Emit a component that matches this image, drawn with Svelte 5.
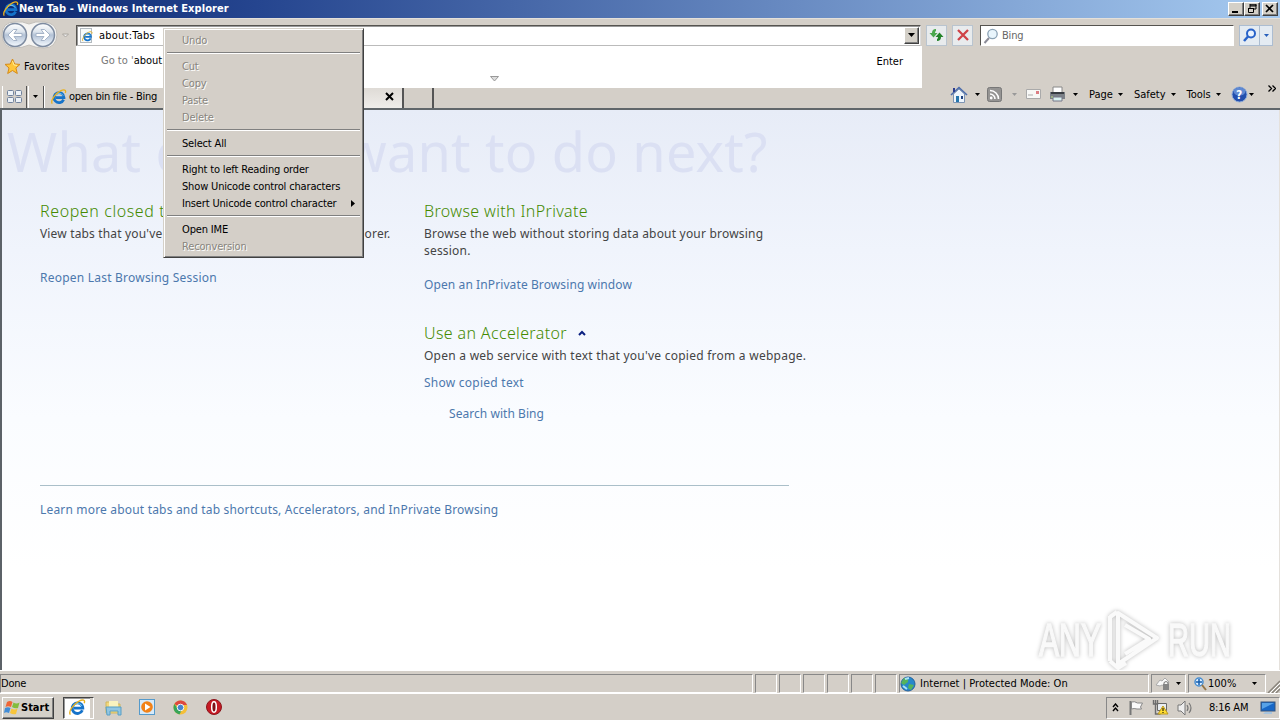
<script lang="ts">
  type MenuItem = { label?: string; disabled?: boolean; submenu?: boolean; separator?: boolean };

  const menu: MenuItem[] = [
    { label: 'Undo', disabled: true },
    { separator: true },
    { label: 'Cut', disabled: true },
    { label: 'Copy', disabled: true },
    { label: 'Paste', disabled: true },
    { label: 'Delete', disabled: true },
    { separator: true },
    { label: 'Select All' },
    { separator: true },
    { label: 'Right to left Reading order' },
    { label: 'Show Unicode control characters' },
    { label: 'Insert Unicode control character', submenu: true },
    { separator: true },
    { label: 'Open IME' },
    { label: 'Reconversion', disabled: true }
  ];

  const commands = ['Page', 'Safety', 'Tools'];
  const panes = [1, 2, 3, 4, 5, 6];
</script>

{#snippet ie(size: number)}
  <svg width={size} height={size} viewBox="0 0 16 16">
    <path d="M12.6 10.6A5 5 0 1 1 13 8.6H4.6" fill="none" stroke="#1673c9" stroke-width="2.7" />
    <path d="M12.2 6.6A4.6 4.6 0 0 0 4 7" fill="none" stroke="#6cc3f4" stroke-width="1" />
    <path d="M1.3 14.7C-1 12 4.500 4.300 9.500 1.900C13 .2 15.600 .7 14.300 4" fill="none" stroke="#e9b11f" stroke-width="1.3" />
  </svg>
{/snippet}

{#snippet caret(light: boolean)}
  <svg class="caret" width="5" height="3" viewBox="0 0 5 3"><path d="M0 0h5L2.500 3z" fill={light ? '#999' : '#000'} /></svg>
{/snippet}

<div class="screen">
  <header class="titlebar">
    {@render ie(16)}
    <h1>New Tab - Windows Internet Explorer</h1>
    <div class="window-buttons">
      <button aria-label="Minimize"><svg width="10" height="9"><path d="M1 7h6v2H1z" /></svg></button>
      <button aria-label="Restore"><svg width="10" height="9"><path d="M3 1h6v4H7M3 0h6v2H3zM3 2v2" fill="none" stroke="#000" /><path d="M1.500 4.500h5v4h-5zM1 4.500h6" fill="none" stroke="#000" /></svg></button>
      <button class="close" aria-label="Close"><svg width="10" height="9"><path d="M1 1l7 7M8 1L1 8" stroke="#000" stroke-width="1.7" /></svg></button>
    </div>
  </header>

  <nav class="navbar">
    <svg class="travel" width="72" height="30" viewBox="0 0 72 30">
      <defs>
        <linearGradient id="orb" x1="0" y1="0" x2="0" y2="1">
          <stop offset="0" stop-color="#fff" />
          <stop offset=".35" stop-color="#dfe6ee" />
          <stop offset=".5" stop-color="#b3c2d6" />
          <stop offset="1" stop-color="#f5faff" />
        </linearGradient>
      </defs>
      <path d="M2 15Q2 2 15 2Q23 1 29 4Q35 1 44 2Q57 3 57 15Q56 28 44 28Q36 28 29 25Q22 28 15 28Q3 28 2 15" fill="#f5f4f2" stroke="#c2bfba" />
      <circle cx="15" cy="15" r="11.500" fill="url(#orb)" stroke="#7d8ba0" stroke-width="1.500" />
      <circle cx="43" cy="15" r="11.500" fill="url(#orb)" stroke="#7d8ba0" stroke-width="1.500" />
      <path d="M22 13.500H14l3-4h-3.500L8 15l5.500 5.500H17l-3-4h8z" fill="#fff" stroke="#a6b4c8" />
      <path d="M36 13.500h8l-3-4h3.500L50 15l-5.500 5.500H41l3-4h-8z" fill="#fff" stroke="#a6b4c8" />
      <path d="M62.500 14h6l-3 3z" fill="#eee" stroke="#aaa6a0" />
    </svg>

    <div class="address">
      <span class="page-icon">{@render ie(11)}</span>
      <span class="url">about:Tabs</span>
      <button class="drop" aria-label="Show addresses"><svg width="7" height="4"><path d="M0 0h7L3.500 4z" /></svg></button>
      <div class="suggest">
        <span class="goto">Go to '</span><span class="typed">about:Tabs'</span>
        <span class="enter">Enter</span>
        <svg class="expand" width="9" height="6"><path d="M.5.5h8l-4 4.500z" fill="#ddd" stroke="#999" /></svg>
      </div>
    </div>

    <button class="tool refresh" aria-label="Refresh">
      <svg width="17" height="16"><path d="M8 2Q4 2 4 6H1.500L5.500 10.500 9.500 6H7Q7 4 8 4z" fill="#4aa84c" /><path d="M9 14q4 0 4-4h2.500L11.500 5.500 7.500 10H10q0 2-1 2z" fill="#238329" /></svg>
    </button>
    <button class="tool" aria-label="Stop">
      <svg width="14" height="14"><path d="M2 2l10 10M12 2L2 12" stroke="#cf4247" stroke-width="2.300" /></svg>
    </button>

    <div class="search">
      <svg width="16" height="16"><circle cx="9.500" cy="6" r="4.700" fill="#e9f5fc" stroke="#8ba2b5" stroke-width="1.300" /><path d="M6 10l-4.500 5" stroke="#8c8c98" stroke-width="2" /></svg>
      <span>Bing</span>
    </div>
    <div class="search-go">
      <span><svg width="15" height="15"><circle cx="9" cy="5.500" r="4" fill="#e8f2ff" stroke="#2862c9" stroke-width="2" /><path d="M6 8.500L2 13" stroke="#2862c9" stroke-width="2.500" /></svg></span>
      <span><svg width="5" height="3"><path d="M0 0h5L2.500 3z" fill="#275fbb" /></svg></span>
    </div>
  </nav>

  <div class="favorites">
    <svg width="17" height="17" viewBox="0 0 17 17"><path d="M8.500 1l2.200 5 5.300.4-4.100 3.600 1.400 5.500-4.800-3-4.800 3L5 10 1 6.400 6.300 6z" fill="#ffc63a" stroke="#d58a18" /><path d="M8.500 3L10 7l3 .4" fill="none" stroke="#ffee98" /></svg>
    <span>Favorites</span>
  </div>

  <div class="tabs-row">
    <div class="quick">
      <svg width="17" height="15"><g fill="#edf2f7" stroke="#71829d"><rect x="1.500" y="1.500" width="6" height="5" rx="1" /><rect x="9.500" y="1.500" width="6" height="5" rx="1" /><rect x="1.500" y="8.500" width="6" height="5" rx="1" /><rect x="9.500" y="8.500" width="6" height="5" rx="1" /></g></svg>
    </div>
    <div class="quick-drop">{@render caret(false)}</div>
    <div class="tab">{@render ie(16)}<span>open bin file - Bing</span></div>
    <div class="tab active">
      <svg width="9" height="9"><path d="M1 1l7 7M8 1L1 8" stroke="#000" stroke-width="2" /></svg>
    </div>
    <div class="new-tab"></div>
    <div class="commands">
      <svg class="home" width="18" height="18" viewBox="0 0 18 18"><path d="M3.500 8v8.500h11V8L9 3z" fill="#eef5fc" stroke="#7e94b2" /><path d="M1 9l8-7.500L17 9" fill="none" stroke="#4b6cab" stroke-width="1.600" /><path d="M3 2h2v4H3z" fill="#2c3d8f" /><path d="M6 10h3v6H6z" fill="#2676ad" /><path d="M11 10h2v3h-2z" fill="#224481" /></svg>
      {@render caret(false)}
      <svg class="rss" width="15" height="15"><rect x=".5" y=".5" width="14" height="14" rx="2" fill="#959493" stroke="#777" /><path d="M3 7a5 5 0 0 1 5 5M3 3.500A8.500 8.500 0 0 1 11.500 12" fill="none" stroke="#fff" stroke-width="1.600" /><circle cx="4.200" cy="11" r="1.400" fill="#fff" /></svg>
      {@render caret(true)}
      <svg class="mail" width="15" height="11"><path d="M.5.500h14v9H.5z" fill="#f8f8f6" stroke="#aaa" /><path d="M2 6h5" stroke="#aaa" /><path d="M10 2h3v3h-3z" fill="#dc7d83" /></svg>
      <svg class="print" width="17" height="17"><path d="M4 1h9v6H4z" fill="#fff" stroke="#888" /><path d="M1 6h15v7H1z" fill="#7b8087" /><path d="M2 6h13v2H2z" fill="#373b41" /><path d="M4 11h9v4H4z" fill="#d9f1ef" stroke="#778" /><path d="M2 11h2" stroke="#bce27c" /></svg>
      {@render caret(false)}
      {#each commands as command}
        <span class="command">{command}{@render caret(false)}</span>
      {/each}
      <svg class="help" width="17" height="17"><circle cx="8.500" cy="8.500" r="7.500" fill="#234fae" stroke="#8eabd8" /><ellipse cx="8.500" cy="5.500" rx="6" ry="4" fill="#5f89d2" /><text x="5" y="13" fill="#fff" font-size="12" font-weight="bold">?</text></svg>
      {@render caret(false)}
      <svg class="chevron" width="8" height="7"><path d="M.5.500l3 3-3 3M4.500.500l3 3-3 3" fill="none" stroke="#000" stroke-width="1.300" /></svg>
    </div>
  </div>

  <main>
    <h2 class="hero">What do you want to do next?</h2>
    <div class="columns">
      <section>
        <h3 class="reopen">Reopen closed tabs</h3>
        <p class="closed">View tabs that you've closed since opening Internet Explorer.</p>
        <a class="session" href="#session">Reopen Last Browsing Session</a>
      </section>
      <section>
        <h3>Browse with InPrivate</h3>
        <p class="storing">Browse the web without storing data about your browsing session.</p>
        <a class="inprivate" href="#inprivate">Open an InPrivate Browsing window</a>
        <h3 class="accelerator">Use an Accelerator <svg width="8" height="6"><path d="M1 5l3-3 3 3" fill="none" stroke="#0a2080" stroke-width="2" /></svg></h3>
        <p class="service">Open a web service with text that you've copied from a webpage.</p>
        <a class="copied" href="#copied">Show copied text</a>
        <a class="bing" href="#bing">Search with Bing</a>
      </section>
    </div>
    <footer><a href="#learn">Learn more about tabs and tab shortcuts, Accelerators, and InPrivate Browsing</a></footer>
    <svg class="watermark" width="220" height="68" viewBox="0 0 220 68">
      <g class="mark-text">
        <text x="5" y="51" textLength="62" lengthAdjust="spacingAndGlyphs">ANY</text>
        <text x="134" y="51" textLength="63" lengthAdjust="spacingAndGlyphs">RUN</text>
      </g>
      <g class="mark-play"><path d="M76 11v45M84 8l39 25-39 26zM91 20l24 14-24 15M76 12l7-5M76 56l8 7 8-5" /></g>
    </svg>
  </main>

  <div class="status">
    <span class="done">Done</span>
    {#each panes as pane (pane)}<span class="pane"></span>{/each}
    <span class="zone">
      <svg width="16" height="16"><circle cx="8" cy="8" r="7" fill="#2688cb" stroke="#24609d" /><path d="M4 2q5 0 4 4l-4 3-3-2zM9 8l5 1-3 5-3-2z" fill="#55b45c" /><path d="M5 3l4-1M3 10l4 3" stroke="#a8e4f8" stroke-width="2" /></svg>
      <span>Internet | Protected Mode: On</span>
    </span>
    <span class="filter">
      <svg width="18" height="16"><path d="M1 9l4-5 2 1 3-3 4 4-3 5-4-2-2 1z" fill="#f8f8f8" stroke="#aaa" /><path d="M8 8h6v6H8z" fill="#858585" /><path d="M9 8V6.500q2-2 4 0V8" fill="none" stroke="#777" /></svg>
      {@render caret(false)}
    </span>
    <span class="zoom">
      <svg width="14" height="14"><circle cx="6" cy="5" r="4" fill="#deefff" stroke="#478dd0" stroke-width="1.500" /><path d="M6 2v6M3 5h6" stroke="#145eaf" stroke-width="1.500" /><path d="M9 8l4 5" stroke="#947548" stroke-width="2" /></svg>
      <span>100%</span>{@render caret(false)}
    </span>
    <svg class="grip" width="13" height="14"><path d="M1 14L13 2M5 14l8-8M9 14l4-4" stroke="#89847b" stroke-width="1.500" /><path d="M2 15L14 3M6 15l8-8" stroke="#fff" /></svg>
  </div>

  <div class="taskbar">
    <button class="start">
      <svg width="17" height="15" viewBox="0 0 17 15"><path d="M3 2q3-2 5.500 0L7 7Q4 5.500 1.500 7z" fill="#ef6637" /><path d="M9.500 2.500q3 2 6 0L14 8q-3 1-6-1z" fill="#83bd3e" /><path d="M1 8q3-1.500 5.500 0L5 13q-3-1.500-5 0z" fill="#428dd7" /><path d="M7.500 8.500q3 2 6 0L12 14q-3 1-6-1z" fill="#f8c53a" /></svg>
      Start
    </button>
    <div class="task">{@render ie(17)}</div>
    <svg class="explorer" width="17" height="17"><path d="M1 3h5l1 2h8v9H1z" fill="#f3d77c" stroke="#d1b85c" /><path d="M4 2h9v8H4z" fill="#faf3bf" /><path d="M1 8h15v8h-3v-4H5v4H2z" fill="#91c6e2" stroke="#579fc6" /></svg>
    <svg class="player" width="17" height="17"><rect x=".5" y=".5" width="15" height="15" fill="#d6eafa" stroke="#559acb" /><circle cx="8" cy="8" r="5.800" fill="#f28218" /><path d="M6 4.500L11.500 8 6 11.500z" fill="#fff" /></svg>
    <svg class="chrome" width="15" height="15"><circle cx="7.500" cy="7.500" r="7" fill="#f4bf38" /><path d="M7.500 7.500L1.400 4A7 7 0 0 1 14 5H7.500z" fill="#dd4840" /><path d="M1.400 4a7 7 0 0 0 5 10.400l3.200-5.600-4.500.2z" fill="#38a55a" /><circle cx="7.500" cy="7.500" r="3.300" fill="#4684cf" stroke="#f4f6f4" /></svg>
    <svg class="opera" width="17" height="17"><circle cx="8" cy="8" r="7.500" fill="#c71a24" stroke="#8b161c" /><ellipse cx="8" cy="8" rx="2.300" ry="5.200" fill="#7f1016" stroke="#fff" stroke-width="1.500" /></svg>
    <div class="tray">
      <svg class="more" width="7" height="9"><path d="M1 4l2.500-3L6 4M1 8l2.500-3L6 8" fill="none" stroke="#000" stroke-width="1.400" /></svg>
      <svg class="flag" width="16" height="16"><path d="M2.500 1v14" stroke="#777" stroke-width="2" /><path d="M3.500 2q3-1 6 1h5l-2 4 1 2H9Q6 8 3.500 9z" fill="#fafafa" stroke="#888" /></svg>
      <svg class="network" width="17" height="17"><path d="M5.500 4.500h9v7h-9z" fill="#e9edf1" stroke="#666" /><path d="M1.500 1v4h4V1M3.500 1v14h5" fill="none" stroke="#6c6c6c" stroke-width="1.400" /><path d="M11 7l5 8H6z" fill="#ffdd31" stroke="#bd991f" /><path d="M11 9v3M11 13v1" stroke="#000" /></svg>
      <svg class="volume" width="17" height="16"><path d="M1 5h3l4-4v14l-4-4H1z" fill="#eee" stroke="#777" /><path d="M10 5q2 3 0 6M12 3q4 5 0 10" fill="none" stroke="#777" stroke-width="1.200" /></svg>
      <span class="clock">8:16 AM</span>
      <svg class="desktop" width="16" height="14"><rect x="1" y="1" width="14" height="9" fill="#1767c7" stroke="#35557d" /><path d="M2 2h12l-8 4-4 2z" fill="#57a2e7" /><path d="M5 11h7v2H3z" fill="#a8c5df" /></svg>
    </div>
  </div>

  <div class="context-menu" role="menu">
    {#each menu as item}
      {#if item.separator}
        <div class="separator"></div>
      {:else}
        <div class="item" class:disabled={item.disabled} role="menuitem" tabindex="-1">
          <span>{item.label}</span>
          {#if item.submenu}<svg width="4" height="7"><path d="M0 0v7l4-3.500z" /></svg>{/if}
        </div>
      {/if}
    {/each}
  </div>
</div>

<style>
  :global(body) {
    background: #d4cfc8;
    overflow: hidden;
  }

  * {
    box-sizing: border-box;
  }

  svg {
    display: block;
    flex-shrink: 0;
  }

  .screen {
    position: relative;
    width: 1280px;
    height: 720px;
    display: flex;
    flex-direction: column;
    background: #d4cfc8;
    color: #000;
    font: 11px/14px "DejaVu Sans Condensed", "DejaVu Sans", "Liberation Sans", sans-serif;
    font-stretch: condensed;
    letter-spacing: -0.2px;
  }

  button {
    padding: 0;
    color: inherit;
    font: inherit;
    letter-spacing: inherit;
    background: #d4d0c8;
    border: 1px solid;
    border-color: #fff #404040 #404040 #fff;
  }

  .titlebar {
    height: 18px;
    display: flex;
    align-items: center;
    padding: 0 2px 0 3px;
    background: linear-gradient(90deg, #0c286f, #25458f 20%, #a6caf0);
  }

  .titlebar h1 {
    flex: 1;
    margin: 1px 0 0;
    font-size: 11px;
    color: #fff;
    letter-spacing: 0.07px;
  }

  .window-buttons {
    display: flex;
  }

  .window-buttons button {
    width: 16px;
    height: 14px;
    display: grid;
    place-items: center;
    box-shadow: inset -1px -1px #808080;
  }

  .window-buttons .close {
    margin-left: 2px;
  }

  .navbar {
    height: 35px;
    display: flex;
    align-items: flex-start;
    padding-top: 6px;
    border-top: 1px solid #e4e0da;
  }

  .travel {
    margin: -5px 4px 0 0;
  }

  .address {
    position: relative;
    width: 845px;
    height: 21px;
    display: flex;
    align-items: center;
    background: #fff;
    border: 1px solid;
    border-color: #55534f #ddd #bbb #55534f;
    box-shadow: inset 1px 1px #999;
  }

  .page-icon {
    width: 12px;
    height: 15px;
    margin-left: 3px;
    padding: 2px 0 0 1px;
    border: 1px solid #b3bac0;
    background: #f7faf9;
  }

  .url {
    flex: 1;
    margin: 2px 0 0 7px;
    letter-spacing: 0.22px;
  }

  .drop {
    width: 15px;
    height: 17px;
    margin-right: 1px;
    display: grid;
    place-items: center;
    box-shadow: inset -1px -1px #808080;
  }

  .suggest {
    position: absolute;
    top: 20px;
    left: -1px;
    width: 846px;
    height: 42px;
    z-index: 2;
    display: flex;
    padding: 8px 19px 0 25px;
    background: #fff;
  }

  .goto {
    color: #777;
    white-space: pre;
    letter-spacing: 0;
  }

  .typed,
  .enter {
    letter-spacing: 0;
  }

  .enter {
    margin-left: auto;
    margin-top: 1px;
  }

  .expand {
    position: absolute;
    left: 414px;
    top: 30px;
  }

  .tool {
    width: 21px;
    height: 21px;
    margin-left: 5px;
    display: grid;
    place-items: center;
    background: #e8ebed;
    border: 1px solid #b9c4cf;
  }

  .refresh {
    margin-left: 5px;
  }

  .search {
    width: 254px;
    height: 21px;
    margin-left: 7px;
    display: flex;
    align-items: center;
    gap: 3px;
    padding: 1px 0 0 2px;
    color: #666;
    background: #fff;
    border: 1px solid;
    border-color: #55534f #fff #fff #55534f;
  }

  .search-go {
    display: flex;
    width: 34px;
    height: 21px;
    margin-left: 5px;
    border: 1px solid #acbdd1;
    background: #e4ebf2;
  }

  .search-go span {
    display: grid;
    place-items: center;
    width: 20px;
  }

  .search-go span + span {
    width: 13px;
    border-left: 1px solid #acbdd1;
  }

  .favorites {
    height: 32px;
    display: flex;
    align-items: center;
    gap: 3px;
    padding: 0 0 5px 4px;
    letter-spacing: 0.1px;
  }

  .favorites span {
    margin-top: 1px;
  }

  .tabs-row {
    height: 25px;
    display: flex;
    align-items: stretch;
    padding-top: 1px;
    padding-left: 2px;
    border-bottom: 2px solid #60666a;
  }

  .quick {
    width: 25px;
    display: grid;
    place-items: center;
    border-right: 1px solid #555;
    border-left: 1px solid #fff;
  }

  .quick-drop {
    width: 16px;
    margin-left: 1px;
    padding-left: 4px;
    display: flex;
    align-items: center;
    border-left: 1px solid #fff;
    border-right: 1px solid #555;
  }

  .tab {
    width: 186px;
    padding-left: 6px;
    display: flex;
    align-items: center;
    gap: 2px;
    border-left: 1px solid #fff;
    letter-spacing: -0.27px;
  }

  .tab span {
    margin-top: 1px;
  }

  .tab.active {
    width: 174px;
    padding-right: 8px;
    justify-content: flex-end;
    background: linear-gradient(#ddd9d4, #efedea);
    border-right: 2px solid #555;
  }

  .new-tab {
    width: 30px;
    border-right: 2px solid #555;
  }

  .commands {
    width: 325px;
    margin-left: auto;
    margin-top: -4px;
    display: flex;
    align-items: center;
  }

  .home {
    margin: 0 7px 0 -5px;
  }

  .rss {
    margin: 0 10px 0 7px;
  }

  .mail {
    margin: 0 8px 0 9px;
  }

  .print {
    margin-right: 7px;
  }

  .command {
    display: flex;
    align-items: center;
    gap: 5px;
    margin-left: 11px;
    letter-spacing: 0;
  }

  .help {
    margin-left: 10px;
    margin-right: 1px;
  }

  .chevron {
    margin: -13px 0 0 14px;
  }

  main {
    position: relative;
    height: 561px;
    overflow: hidden;
    background: linear-gradient(#e7ecf7, #f0f4fc 25%, #fafcff 55%, #fff 82%);
    border-left: 2px solid #5c6268;
    border-right: 1px solid #e5e1dc;
    font: 12px/17px "Noto Sans", "Open Sans", sans-serif;
    letter-spacing: 0.18px;
    color: #444;
  }

  .hero {
    height: 70px;
    margin: 6px 0 15px 5px;
    font-size: 54px;
    font-weight: 400;
    line-height: 70px;
    color: #dbe0f3;
    white-space: nowrap;
    letter-spacing: 0.2px;
  }

  .columns {
    display: flex;
    height: 284px;
    padding-left: 38px;
  }

  .columns section {
    width: 384px;
    display: flex;
    flex-direction: column;
    align-items: flex-start;
    white-space: nowrap;
  }

  h3 {
    margin: 0;
    height: 24px;
    font-size: 16px;
    font-weight: 300;
    line-height: 20px;
    letter-spacing: 0.36px;
    color: #448a00;
  }

  .reopen {
    letter-spacing: 0.6px;
  }

  p {
    margin: 0;
  }

  a {
    color: #4c78ad;
    text-decoration: none;
  }

  .closed {
    letter-spacing: 0.16px;
  }

  .session {
    margin-top: 27px;
    letter-spacing: 0.22px;
  }

  .storing {
    width: 350px;
    white-space: normal;
    letter-spacing: 0.2px;
  }

  .inprivate {
    margin-top: 17px;
    letter-spacing: 0.1px;
  }

  .accelerator {
    display: flex;
    gap: 11px;
    align-items: center;
    margin-top: 30px;
    height: 20px;
  }

  .service {
    margin-top: 4px;
    letter-spacing: 0.25px;
  }

  .copied {
    margin-top: 10px;
    letter-spacing: 0.25px;
  }

  .bing {
    margin: 14px 0 0 25px;
    letter-spacing: 0.05px;
  }

  footer {
    width: 749px;
    margin-left: 38px;
    padding-top: 15px;
    border-top: 1px solid #aabfc9;
    white-space: nowrap;
  }

  .watermark {
    position: absolute;
    right: 25px;
    bottom: -3px;
    filter: drop-shadow(0 0 2px #bbb);
  }

  .mark-text {
    font: 46px "Liberation Sans", sans-serif;
    letter-spacing: 0;
    fill: #f9f9f9;
    stroke: #f9f9f9;
    stroke-width: 1.5;
  }

  .mark-play path {
    fill: none;
    stroke: #fafafa;
    stroke-width: 4;
    stroke-linejoin: round;
  }

  .status {
    height: 24px;
    display: flex;
    align-items: center;
    padding-top: 3px;
    border-top: 1px solid #fff;
    border-bottom: 1px solid #fff;
  }

  .status > span {
    height: 19px;
    display: flex;
    align-items: center;
    flex-shrink: 0;
    border: 1px solid;
    border-color: #888 #fff #fff #888;
    margin-right: 2px;
  }

  .status .done {
    width: 753px;
  }

  .status .pane {
    width: 22px;
  }

  .status .zone {
    width: 250px;
    gap: 4px;
    letter-spacing: 0.03px;
  }

  .status .filter {
    width: 35px;
    padding-left: 3px;
    gap: 3px;
  }

  .status .zoom {
    width: 78px;
    padding-left: 4px;
    gap: 1px;
    letter-spacing: 0;
  }

  .zoom .caret {
    margin-left: 15px;
  }

  .grip {
    margin: 4px 0 0 -1px;
  }

  .taskbar {
    height: 26px;
    display: flex;
    align-items: center;
    padding: 1px 0 0 2px;
  }

  .start {
    width: 52px;
    height: 22px;
    display: flex;
    align-items: center;
    padding-left: 1px;
    font-weight: bold;
    letter-spacing: 0;
    box-shadow: inset -1px -1px #808080;
  }

  .task {
    width: 31px;
    height: 22px;
    margin-left: 9px;
    padding-left: 5px;
    display: flex;
    align-items: center;
    background: #fff;
    border: 1px solid;
    border-color: #444 #fff #fff #444;
    box-shadow: inset -3px 0 #d4cfc8, inset 1px 1px #999;
  }

  .explorer {
    margin-left: 11px;
  }

  .player {
    margin-left: 17px;
  }

  .chrome {
    margin-left: 17px;
  }

  .opera {
    margin-left: 18px;
  }

  .tray {
    width: 174px;
    height: 22px;
    margin-left: auto;
    display: flex;
    align-items: center;
    padding: 0 3px 0 5px;
    border: 1px solid;
    border-color: #888 #fff #fff #888;
  }

  .flag {
    margin-left: 9px;
  }

  .network {
    margin-left: 8px;
  }

  .volume {
    margin-left: 8px;
  }

  .clock {
    margin-left: 15px;
  }

  .desktop {
    margin-left: auto;
  }

  .context-menu {
    position: absolute;
    top: 28px;
    left: 163px;
    z-index: 5;
    width: 201px;
    height: 230px;
    padding: 3px 2px;
    background: #d4cfc8;
    border: 1px solid;
    border-color: #d4d0c8 #404040 #404040 #d4d0c8;
    box-shadow: inset 1px 1px #fff, inset -1px -1px #808080;
    letter-spacing: -0.16px;
  }

  .item {
    height: 17px;
    display: flex;
    align-items: center;
    justify-content: space-between;
    padding: 0 6px 0 16px;
    white-space: nowrap;
  }

  .item.disabled {
    color: #88857e;
    text-shadow: 1px 1px #fff;
  }

  .separator {
    height: 2px;
    margin: 3px 1px 4px;
    border-top: 1px solid #808080;
    border-bottom: 1px solid #fff;
  }
</style>
